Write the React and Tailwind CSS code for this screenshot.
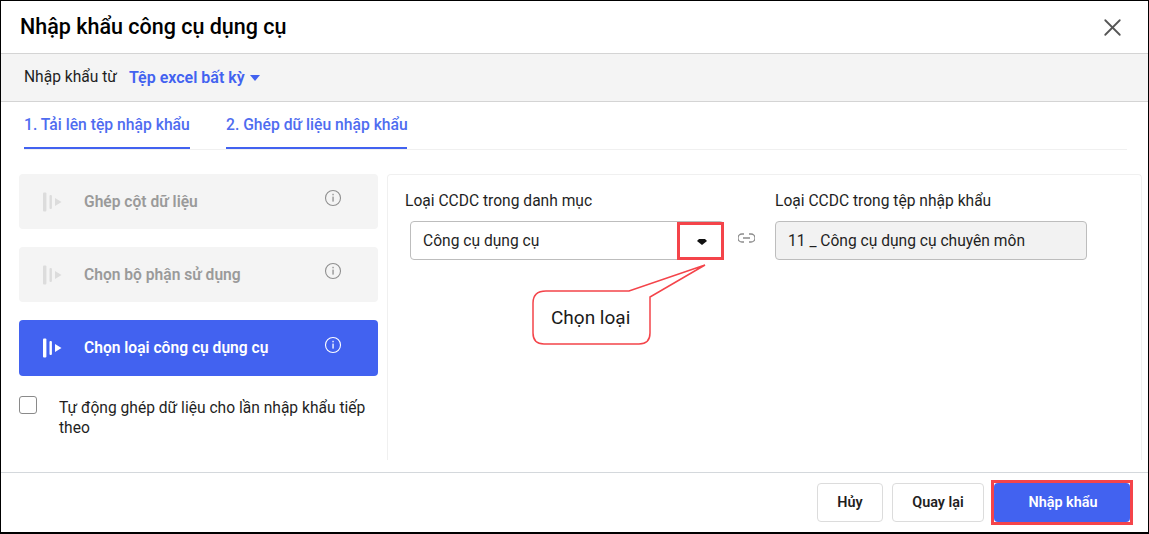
import { X } from "lucide-react";

const font = { fontFamily: "Roboto, sans-serif" };

function StepIcon({ active }) {
  const c = active ? "#ffffff" : "#dcdcdc";
  return (
    <svg width="19" height="20" viewBox="0 0 19 20" className="shrink-0">
      <rect x="0" y="0.5" width="3.4" height="19" rx="1" fill={c} />
      <rect x="6.5" y="3" width="2.4" height="14" rx="1" fill={c} />
      <path d="M12 6 L18.5 10 L12 14 Z" fill={c} />
    </svg>
  );
}

function InfoIcon({ active }) {
  const c = active ? "#ffffff" : "#8f8f8f";
  return (
    <svg width="18" height="18" viewBox="0 0 18 18" className="shrink-0" fill="none">
      <circle cx="9" cy="9" r="7.5" stroke={c} strokeWidth="1.1" />
      <rect x="8.4" y="7.6" width="1.3" height="5" fill={c} />
      <rect x="8.4" y="4.8" width="1.3" height="1.5" fill={c} />
    </svg>
  );
}

function Step({ label, active, h }) {
  return (
    <div
      className={`flex items-center rounded pl-[24px] pr-[36px] ${h} ${
        active ? "bg-[#4262f0] text-white" : "bg-[#f4f4f4] text-[#9a9a9a]"
      }`}
    >
      <StepIcon active={active} />
      <span className="mt-[2px] ml-[22px] flex-1 text-[15.6px] font-semibold">{label}</span>
      <span className={active ? "-mt-[6px]" : "-mt-[8px]"}>
        <InfoIcon active={active} />
      </span>
    </div>
  );
}

export default function App() {
  return (
    <div
      className="relative flex h-[534px] w-[1149px] flex-col overflow-hidden border-t border-r border-b-2 border-l border-black bg-white text-[#1f1f1f]"
      style={font}
    >
      {/* tieu de */}
      <header className="flex h-[53px] items-center justify-between border-b border-[#d4d4d4] pr-[21px] pl-[19px]">
        <h1 className="mt-[1px] text-[21.5px] font-medium text-black">Nhập khẩu công cụ dụng cụ</h1>
        <X size={29} strokeWidth={1.5} className="text-[#555]" />
      </header>

      <div className="flex h-[48px] items-center border-b border-[#d4d4d4] bg-[#f4f4f4] pl-[23px] text-[15.6px]">
        <span>Nhập khẩu từ</span>
        <span className="ml-[12px] text-[16px] font-semibold text-[#4262f0]">Tệp excel bất kỳ</span>
        <svg width="10" height="6" viewBox="0 0 10 6" className="ml-[5px]">
          <path d="M0 0 H10 L5 6 Z" fill="#4262f0" />
        </svg>
      </div>

      {/* tabs */}
      <div className="mr-[21px] ml-[23px] flex h-[48px] gap-[36px] border-b border-[#f0f0f0] text-[15.7px] font-medium text-[#4f6cf0]">
        <div className="flex w-[166px] items-center whitespace-nowrap border-b-2 border-[#4262f0] pt-[1px]">1. Tải lên tệp nhập khẩu</div>
        <div className="flex w-[181px] items-center whitespace-nowrap border-b-2 border-[#4262f0] pt-[1px]">2. Ghép dữ liệu nhập khẩu</div>
      </div>

      <div className="flex h-[322px] items-start pt-[24px] pl-[18px]">
        {/* cot trai */}
        <div className="flex w-[359px] flex-col gap-[18px]">
          <Step label="Ghép cột dữ liệu" h="h-[55px]" />
          <Step label="Chọn bộ phận sử dụng" h="h-[55px]" />
          <Step label="Chọn loại công cụ dụng cụ" h="h-[56px]" active />
          <label className="flex items-start text-[15.6px] leading-[19.5px]">
            <span className="mt-[2px] h-[18px] w-[18px] shrink-0 rounded-[3px] border border-[#8a8a8a]" />
            <span className="mt-[5px] ml-[22px] w-[315px]">Tự động ghép dữ liệu cho lần nhập khẩu tiếp theo</span>
          </label>
        </div>

        {/* noi dung */}
        <div className="ml-[9px] h-[286px] w-[755px] rounded-t border-x border-t border-[#f0f0f0] pt-[16px] pl-[17px] text-[15.6px]">
          <div className="flex">
            <div className="w-[370px]">
              <div className="h-[20px] leading-[20px]">Loại CCDC trong danh mục</div>
              <div className="mt-[10px] ml-[5px] flex h-[39px] w-[314px] items-center justify-between rounded border border-[#bdbdbd] pr-[16px] pl-[12px]">
                <span className="mt-[2px]">Công cụ dụng cụ</span>
                <svg width="10" height="6" viewBox="0 0 10 6" className="mt-[3px]">
                  <path d="M2 0 H8 L10 2 L5 6 L0 2 Z" fill="#111" />
                </svg>
              </div>
            </div>
            <div>
              <div className="h-[20px] leading-[20px]">Loại CCDC trong tệp nhập khẩu</div>
              <div className="mt-[10px] flex h-[39px] w-[312px] items-center rounded border border-[#bdbdbd] bg-[#f2f2f2] pt-[2px] pl-[12px]">
                11 _ Công cụ dụng cụ chuyên môn
              </div>
            </div>
          </div>
        </div>
      </div>

      {/* chan trang */}
      <footer className="flex h-[60px] items-center justify-end border-t border-[#d4d8dc] pr-[15px] text-[14.4px] font-semibold">
        <button className="h-[39px] w-[66px] rounded border border-[#dcdcdc]">Hủy</button>
        <button className="ml-[9px] h-[39px] w-[92px] rounded border border-[#dcdcdc]">Quay lại</button>
        <div className="ml-[7px] h-[45px] w-[142px] border-[3px] border-[#f4444a]">
          <button className="h-full w-full rounded-sm bg-[#4262f0] pl-[2px] text-white">Nhập khẩu</button>
        </div>
      </footer>

      {/* chu thich do phu len tren */}
      <div className="absolute top-[221px] left-[676px] h-[38px] w-[47px] border-[3px] border-[#f4444a]" />
      <svg
        width="17"
        height="10"
        viewBox="0 0 17 10"
        className="absolute top-[232px] left-[737px]"
        fill="none"
        stroke="#8c8c8c"
        strokeWidth="1.3"
      >
        <path d="M6 1 H4 a3.8 3.8 0 0 0 0 8 H6 M11 1 H13 a3.8 3.8 0 0 1 0 8 H11 M5 5 H12" />
      </svg>
      <svg width="200" height="100" viewBox="0 0 200 100" className="absolute top-[260px] left-[526px]" fill="#fff" stroke="#f4444a" strokeWidth="1.5">
        <path d="M19 30 H102 L178 4 L123 36 V72 Q123 83 112 83 H17 Q6 83 6 72 V42 Q6 30 19 30 Z" />
      </svg>
      <span className="absolute top-[305px] left-[550px] text-[19px] leading-[24px] text-[#1a1a1a]">Chọn loại</span>
    </div>
  );
}
